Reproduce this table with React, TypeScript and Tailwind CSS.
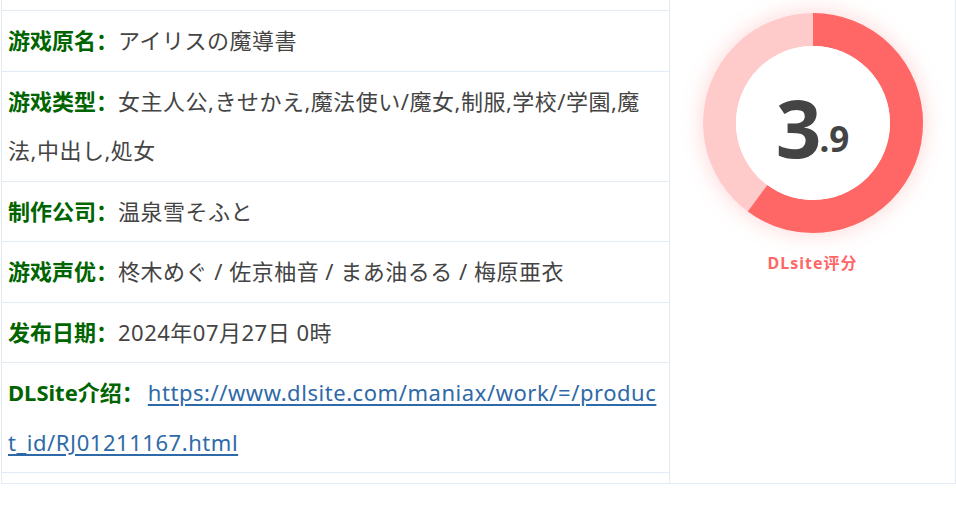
import React from 'react'

const ROWS: { label: string; value: string; link?: boolean }[] = [
  { label: '游戏原名：', value: 'アイリスの魔導書' },
  { label: '游戏类型：', value: '女主人公,きせかえ,魔法使い/魔女,制服,学校/学園,魔法,中出し,処女' },
  { label: '制作公司：', value: '温泉雪そふと' },
  { label: '游戏声优：', value: '柊木めぐ / 佐京柚音 / まあ油るる / 梅原亜衣' },
  { label: '发布日期：', value: '2024年07月27日 0時' },
  { label: 'DLSite介绍：', value: 'https://www.dlsite.com/maniax/work/=/product_id/RJ01211167.html', link: true },
]

const SCORE = 3.9
const FRACTION = 0.6

function Donut() {
  const r = 93.5
  const c = 2 * Math.PI * r
  return (
    <div className="relative w-[220px] h-[220px] rounded-full shadow-[0_0_22px_rgba(255,102,102,0.28)]">
      <svg width="220" height="220" viewBox="0 0 220 220" className="block">
        <circle cx="110" cy="110" r={r} fill="none" stroke="#ffcaca" strokeWidth="33" />
        <circle
          cx="110" cy="110" r={r} fill="none" stroke="#ff6666" strokeWidth="33"
          strokeDasharray={`${c * FRACTION} ${c}`}
          transform="rotate(-90 110 110)"
        />
        <circle cx="110" cy="110" r="77" fill="#fff" />
      </svg>
      <div className="absolute inset-0 flex items-end justify-center pb-[66px] text-[#444] font-bold">
        <span className="text-[80px] leading-none tracking-[-2px]">{Math.floor(SCORE)}</span>
        <span className="text-[35px] leading-none mb-[11px]">.{Math.round((SCORE % 1) * 10)}</span>
      </div>
    </div>
  )
}

export default function App() {
  return (
    <div className="w-[956px] h-[511px] bg-white" style={{ fontFamily: '"Noto Sans", "Noto Sans CJK SC", sans-serif' }}>
      <div className="ml-[1px] w-[955px] flex border border-t-0 border-[#e3ecf4]">
        {/* 左侧信息表 */}
        <div className="w-[668px] border-r border-[#e3ecf4] pb-[10px]">
          <div className="h-[11px] border-b border-[#e3ecf4]" />
          {ROWS.map(row => (
            <div key={row.label} className="px-[6px] py-[5px] text-[22px] leading-[49.5px] border-b border-[#e3ecf4] break-all">
              <span className="font-bold text-[#006400]">{row.label}</span>
              {row.link ? (
                <a href="#" className="ml-[4px] text-[#2f6aa8] underline underline-offset-[3px] tracking-[0.55px]">{row.value}</a>
              ) : (
                <span className="text-[#444] tracking-[0.5px]">{row.value}</span>
              )}
            </div>
          ))}
        </div>

        {/* 评分 */}
        <div className="flex-1 flex flex-col items-center pt-[13px]">
          <Donut />
          <div className="mt-[18px] text-[16px] font-bold text-[#ff6666] tracking-[1px]">DLsite评分</div>
        </div>
      </div>
    </div>
  )
}
